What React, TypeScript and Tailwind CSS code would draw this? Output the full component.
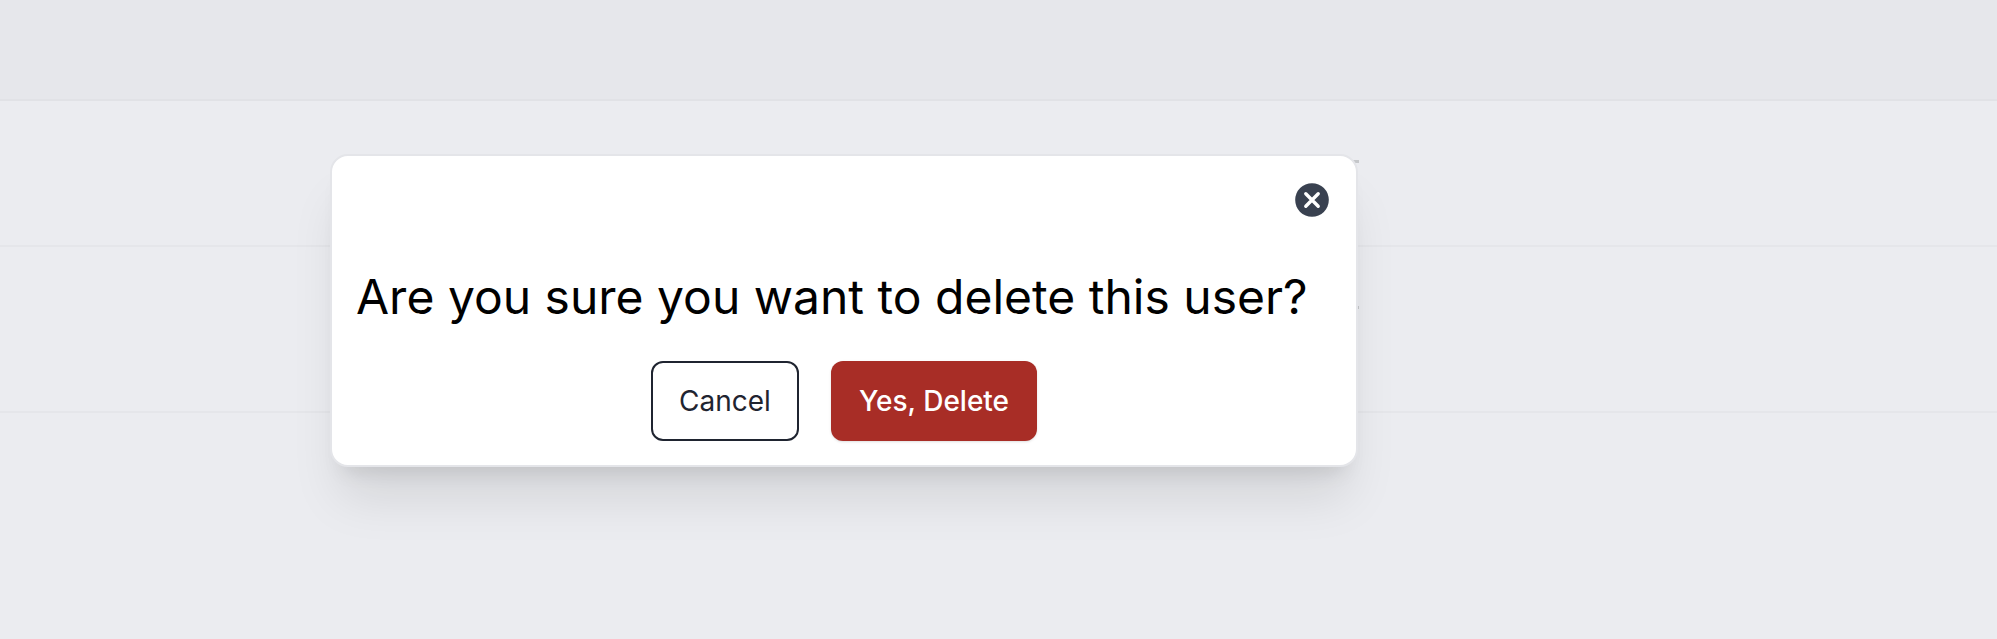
interface ButtonProps {
  label: string;
  danger?: boolean;
}

const CloseIcon = () => (
  <svg width="34" height="34" viewBox="0 0 34 34" fill="none">
    <circle cx="17" cy="17" r="16.8" fill="#394150" />
    <path d="M10.8 10.8 23.2 23.2M23.2 10.8 10.8 23.2" stroke="#fff" strokeWidth="3.4" strokeLinecap="round" />
  </svg>
);

function DialogButton({ label, danger = false }: ButtonProps) {
  return (
    <button
      className={
        danger
          ? "h-20 w-[206px] rounded-xl bg-[#a82d26] text-[28px] font-medium text-white shadow-sm"
          : "h-20 w-[148px] rounded-xl border-2 border-[#1f2430] bg-white text-[28px] text-[#1f2430]"
      }
    >
      {label}
    </button>
  );
}

export default function App() {
  return (
    <div className="relative h-[639px] w-full overflow-hidden bg-[#ebecf0] font-['Inter',sans-serif]">
      {/* table rows behind the dialog */}
      <div className="h-[101px] border-b-2 border-[#e1e2e6] bg-[#e6e7eb]" />
      <div className="h-[146px] border-b-2 border-[#e5e6ea]" />
      <div className="h-[166px] border-b-2 border-[#e5e6ea]" />
      <div className="absolute top-[160px] left-[1350px] h-[3px] w-[9px] bg-[#c5c7ca]" />
      <div className="absolute top-[306px] left-[1357px] h-[3px] w-[2px] bg-[#c5c7ca]" />

      <div
        role="dialog"
        className="absolute top-[154px] left-[330px] flex h-[313px] w-[1028px] flex-col rounded-[18px] border-2 border-[#e4e5e9] bg-white px-6 pt-[27px] shadow-[0_40px_50px_-10px_rgba(0,0,0,0.1),0_16px_20px_-12px_rgba(0,0,0,0.1)]"
      >
        <button aria-label="Close" className="mr-[3px] self-end">
          <CloseIcon />
        </button>
        <h2 className="mt-[48px] text-[48px] leading-[64px] whitespace-nowrap text-black">
          Are you sure you want to delete this user?
        </h2>
        <div className="mt-8 flex justify-center gap-8">
          <DialogButton label="Cancel" />
          <DialogButton label="Yes, Delete" danger />
        </div>
      </div>
    </div>
  );
}
